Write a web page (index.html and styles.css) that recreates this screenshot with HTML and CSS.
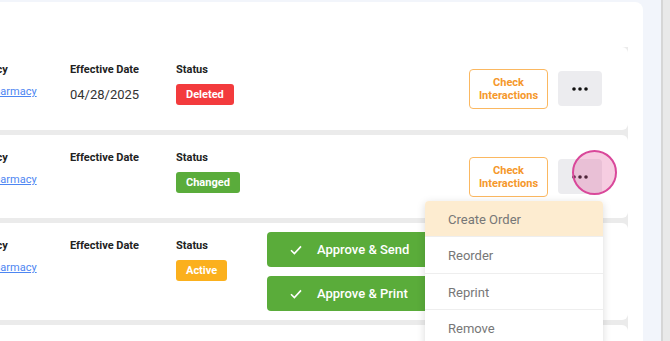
FILE: index.html
```html
<!doctype html>
<html lang="en">
<head>
    <meta charset="UTF-8">
    <meta name="viewport" content="width=device-width, initial-scale=1.0">
    <title>Prescriptions</title>
    <link rel="stylesheet" href="styles.css">
</head>
<body>
    <div class="panel">
        <div class="panel-head"></div>
        <div class="list">
            <div class="card">
                <div class="info">
                    <div class="col col-pharmacy">
                        <div class="label">Pharmacy</div>
                        <a href="#" class="link">Local Pharmacy</a>
                    </div>
                    <div class="col col-date">
                        <div class="label">Effective Date</div>
                        <div class="value">04/28/2025</div>
                    </div>
                    <div class="col col-status">
                        <div class="label">Status</div>
                        <span class="badge badge-deleted">Deleted</span>
                    </div>
                </div>
                <div class="actions">
                    <button class="btn-check">Check<br>Interactions</button>
                    <button class="btn-more"><svg width="16" height="4" viewBox="0 0 16 4"><circle cx="2" cy="2" r="1.8"/><circle cx="8" cy="2" r="1.8"/><circle cx="14" cy="2" r="1.8"/></svg></button>
                </div>
            </div>

            <div class="card">
                <div class="info">
                    <div class="col col-pharmacy">
                        <div class="label">Pharmacy</div>
                        <a href="#" class="link">Local Pharmacy</a>
                    </div>
                    <div class="col col-date">
                        <div class="label">Effective Date</div>
                        <div class="value"></div>
                    </div>
                    <div class="col col-status">
                        <div class="label">Status</div>
                        <span class="badge badge-changed">Changed</span>
                    </div>
                </div>
                <div class="actions">
                    <button class="btn-check">Check<br>Interactions</button>
                    <div class="more-wrap">
                        <button class="btn-more"><svg width="16" height="4" viewBox="0 0 16 4"><circle cx="2" cy="2" r="1.8"/><circle cx="8" cy="2" r="1.8"/><circle cx="14" cy="2" r="1.8"/></svg></button>
                        <span class="touch"></span>
                        <ul class="menu">
                            <li class="active">Create Order</li>
                            <li>Reorder</li>
                            <li>Reprint</li>
                            <li>Remove</li>
                        </ul>
                    </div>
                </div>
            </div>

            <div class="card">
                <div class="info">
                    <div class="col col-pharmacy">
                        <div class="label">Pharmacy</div>
                        <a href="#" class="link">Local Pharmacy</a>
                    </div>
                    <div class="col col-date">
                        <div class="label">Effective Date</div>
                        <div class="value"></div>
                    </div>
                    <div class="col col-status">
                        <div class="label">Status</div>
                        <span class="badge badge-active">Active</span>
                    </div>
                </div>
                <div class="actions">
                    <div class="approve-stack">
                        <button class="btn-approve"><svg width="12" height="10" viewBox="0 0 12 10"><polyline points="1,5.2 4.4,8.6 11,1.4"/></svg>Approve &amp; Send</button>
                        <button class="btn-approve"><svg width="12" height="10" viewBox="0 0 12 10"><polyline points="1,5.2 4.4,8.6 11,1.4"/></svg>Approve &amp; Print</button>
                    </div>
                    <button class="btn-check">Check<br>Interactions</button>
                    <button class="btn-more"><svg width="16" height="4" viewBox="0 0 16 4"><circle cx="2" cy="2" r="1.8"/><circle cx="8" cy="2" r="1.8"/><circle cx="14" cy="2" r="1.8"/></svg></button>
                </div>
            </div>

            <div class="card">
                <div class="info">
                    <div class="col col-pharmacy">
                        <div class="label">Pharmacy</div>
                        <a href="#" class="link">Local Pharmacy</a>
                    </div>
                    <div class="col col-date">
                        <div class="label">Effective Date</div>
                        <div class="value">04/28/2025</div>
                    </div>
                    <div class="col col-status">
                        <div class="label">Status</div>
                        <span class="badge badge-active">Active</span>
                    </div>
                </div>
            </div>
        </div>
    </div>
    <div class="gutter"></div>
    <div class="scrollbar"></div>
</body>
</html>
```

FILE: styles.css
```css
html, body {
    height: 100%;
}
body {
    margin: 0;
    display: flex;
    overflow: hidden;
    font-family: Roboto, "Liberation Sans", sans-serif;
    background-color: #f2f5fb;
}
.panel {
    width: 643px;
    flex-shrink: 0;
    margin-top: 2px;
    background: #fff;
    border-radius: 0 8px 0 0;
    overflow: hidden;
}
.panel-head {
    height: 45px;
}
.gutter {
    flex: 1;
}
.scrollbar {
    width: 7px;
    background: #e9e9e9;
    border-left: 2px solid #d6d6d6;
}
.list {
    margin: 0 15px 0 -60px;
    background: #ebebeb;
    display: flex;
    flex-direction: column;
    gap: 5px;
}
.card {
    display: flex;
    align-items: center;
    min-height: 83px;
    box-sizing: border-box;
    padding: 9px 26px 9px 18px;
    background: #fff;
    border-radius: 6px;
}
.info {
    display: flex;
    align-self: flex-start;
    margin-top: 7px;
}
.col {
    display: flex;
    flex-direction: column;
    align-items: flex-start;
}
.col-pharmacy {
    width: 112px;
}
.col-date {
    width: 106px;
}
.label {
    font-size: 11px;
    line-height: 14px;
    font-weight: 700;
    color: #222;
    margin-bottom: 7px;
}
.link {
    font-size: 11px;
    line-height: 16px;
    color: #4d86f2;
    text-decoration: underline;
}
.value {
    font-size: 13px;
    line-height: 21px;
    color: #333;
}
.badge {
    display: inline-block;
    font-size: 11px;
    font-weight: 700;
    line-height: 21px;
    padding: 0 10px;
    color: #fff;
    border-radius: 3px;
}
.badge-deleted {
    background: #f33b3d;
}
.badge-changed {
    background: #5aac3b;
}
.badge-active {
    background: #fbb01d;
}
.actions {
    margin-left: auto;
    display: flex;
    align-items: center;
    gap: 10px;
}
button {
    font-family: inherit;
    cursor: pointer;
}
.btn-check {
    width: 79px;
    height: 40px;
    padding: 0;
    background: #fff;
    border: 1px solid #fbb861;
    border-radius: 4px;
    color: #f5982b;
    font-size: 11px;
    line-height: 13px;
    font-weight: 700;
}
.btn-more {
    width: 44px;
    height: 35px;
    padding: 0;
    border: none;
    border-radius: 4px;
    background: #ececef;
    display: flex;
    align-items: center;
    justify-content: center;
}
.btn-more svg {
    fill: #111;
}
.more-wrap {
    position: relative;
}
.touch {
    position: absolute;
    left: 14px;
    top: -9px;
    width: 41px;
    height: 41px;
    border-radius: 50%;
    border: 2px solid #d9489a;
    background: rgba(225, 88, 155, 0.3);
}
.menu {
    position: absolute;
    right: -1px;
    top: 42px;
    width: 178px;
    margin: 0;
    padding: 0;
    list-style: none;
    background: #fff;
    border-radius: 4px;
    box-shadow: 0 2px 8px rgba(0, 0, 0, 0.15);
    z-index: 2;
}
.menu li {
    box-sizing: border-box;
    height: 36.4px;
    line-height: 37px;
    padding-left: 23px;
    font-size: 13px;
    color: #777;
    border-bottom: 1px solid #eee;
}
.menu li.active {
    background: #fdecd0;
    border-radius: 4px 4px 0 0;
}
.approve-stack {
    display: flex;
    flex-direction: column;
    gap: 9px;
}
.btn-approve {
    width: 192px;
    height: 35px;
    border: none;
    border-radius: 4px;
    background: #5aac3a;
    color: #fff;
    font-size: 13px;
    font-weight: 500;
    display: flex;
    align-items: center;
    gap: 15px;
    padding: 0 0 0 23px;
}
.btn-approve svg {
    fill: none;
    stroke: #fff;
    stroke-width: 1.6;
}
```
